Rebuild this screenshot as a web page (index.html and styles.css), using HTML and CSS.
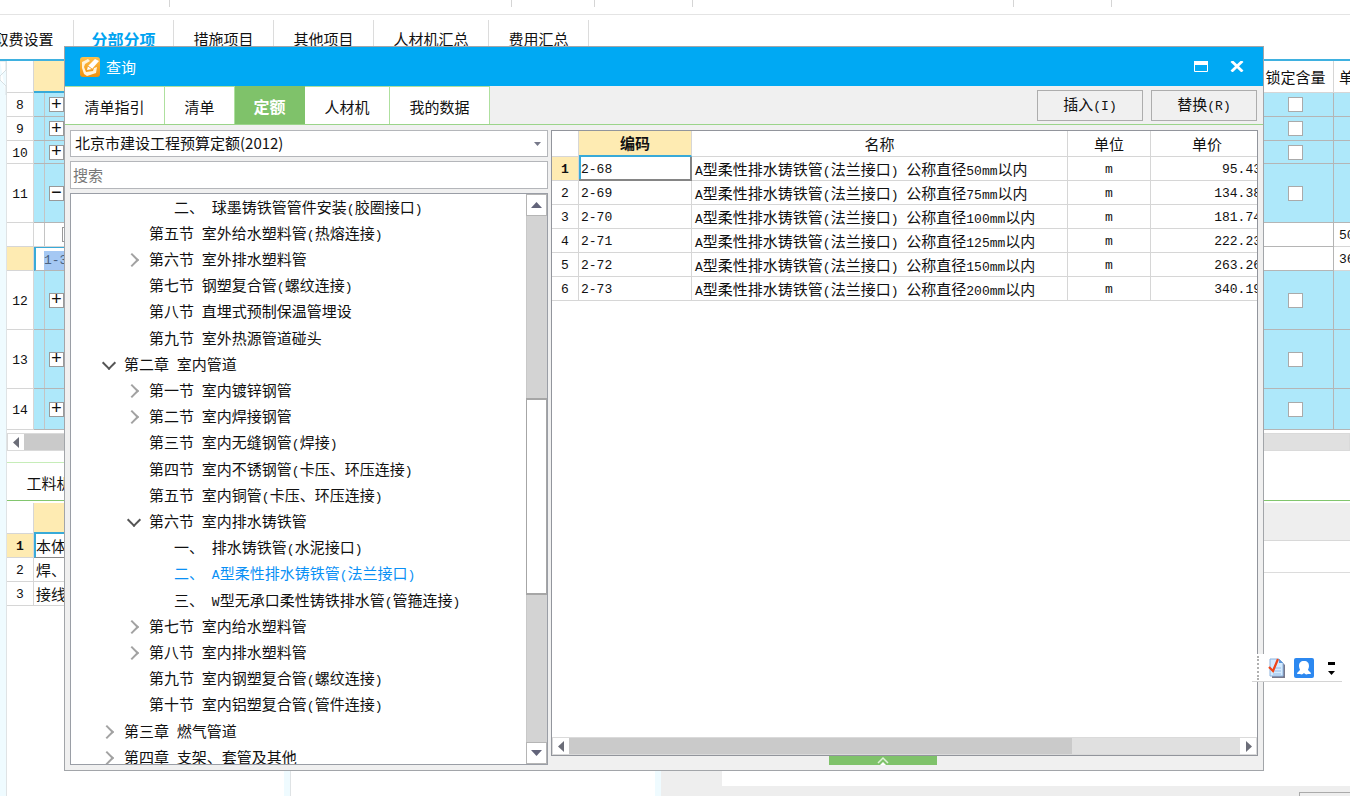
FILE: index.html
```html
<!DOCTYPE html>
<html lang="zh-CN">
<head>
<meta charset="utf-8">
<title>查询</title>
<link rel="stylesheet" href="styles.css">
</head>
<body>
<div class="app">
  <div class="ribbon"><i class="g1"></i><i class="g2"></i><i class="g3"></i><i class="g4"></i><i class="g5"></i><i class="g6"></i></div>
  <nav class="main-tabs">
    <button>取费设置</button><button class="on">分部分项</button><button>措施项目</button><button>其他项目</button><button class="wide">人材机汇总</button><button>费用汇总</button>
  </nav>
  <div class="workspace">
    <aside class="rail"><svg width="7" height="34" viewBox="0 0 7 34"><path d="M0 0H6V9L0 15V19L6 25V34" fill="#fff" stroke="#d6dfe2"/></svg></aside>
    <main class="content">
      <table class="bill">
        <colgroup><col class="c-num"><col><col class="c-lock"><col class="c-last"></colgroup>
        <thead><tr class="h32"><th></th><th class="hot"></th><th>锁定含量</th><th class="lead">单</th></tr></thead>
        <tbody>
          <tr class="blue h24"><td>8</td><td class="tree-cell"><button class="box" aria-label="展开">+</button></td><td><input type="checkbox" aria-label="锁定含量 8"></td><td></td></tr>
          <tr class="blue h24"><td>9</td><td class="tree-cell"><button class="box" aria-label="展开">+</button></td><td><input type="checkbox" aria-label="锁定含量 9"></td><td></td></tr>
          <tr class="blue h23"><td>10</td><td class="tree-cell"><button class="box" aria-label="展开">+</button></td><td><input type="checkbox" aria-label="锁定含量 10"></td><td></td></tr>
          <tr class="blue h59"><td>11</td><td class="tree-cell"><button class="box" aria-label="折叠">−</button></td><td><input type="checkbox" aria-label="锁定含量 11"></td><td></td></tr>
          <tr class="h24"><td></td><td class="tree-cell sub"><button class="box" aria-label="折叠"></button></td><td></td><td class="lead">50</td></tr>
          <tr class="h24 current"><td class="mark"></td><td class="cell-edit"><span>1-3</span></td><td></td><td class="lead">36</td></tr>
          <tr class="blue h59"><td>12</td><td class="tree-cell"><button class="box" aria-label="展开">+</button></td><td><input type="checkbox" aria-label="锁定含量 12"></td><td></td></tr>
          <tr class="blue h59"><td>13</td><td class="tree-cell"><button class="box" aria-label="展开">+</button></td><td><input type="checkbox" aria-label="锁定含量 13"></td><td></td></tr>
          <tr class="blue h41"><td>14</td><td class="tree-cell"><button class="box" aria-label="展开">+</button></td><td><input type="checkbox" aria-label="锁定含量 14"></td><td></td></tr>
        </tbody>
      </table>
      <div class="hbar back-bar"><button aria-label="向左滚动"><svg width="7" height="11" viewBox="0 0 7 11"><path d="M6 0V11L0 5.500Z" fill="#6b6d78"/></svg></button><span class="thumb"></span></div>
      <div class="sub-tabs"><button>工料机显示</button></div>
      <div class="lower">
        <section class="pane-a">
          <table class="detail">
            <colgroup><col class="c-num"><col></colgroup>
            <thead><tr class="h31"><th></th><th class="hot"></th></tr></thead>
            <tbody>
              <tr class="h24"><td class="mark">1</td><td class="sel">本体</td></tr>
              <tr class="h24"><td>2</td><td>焊、</td></tr>
              <tr class="h24"><td>3</td><td>接线</td></tr>
            </tbody>
          </table>
        </section>
        <section class="pane-b"></section>
        <section class="pane-c">
          <div class="c-head"></div><div class="c-line"></div>
          <div class="c-body"><div class="c-side"></div><div class="c-sheet"></div></div>
          <div class="c-foot"><button aria-label="操作"></button></div>
        </section>
      </div>
    </main>
  </div>
</div>

<div class="dialog" role="dialog" aria-label="查询">
  <header class="titlebar">
    <svg width="20" height="20" viewBox="0 0 20 20"><defs><linearGradient id="o" x2="0" y2="1"><stop stop-color="#ffc04a"/><stop offset="1" stop-color="#f0900c"/></linearGradient></defs><rect width="20" height="20" rx="3" fill="url(#o)"/><path d="M2 5L8 2L10 4L5 7L4 10L6 15L13 14L14 11L17 10L16 16L7 19L4 17L2 11Z" fill="#fff3da"/><path d="M7 13L8 9L15 2L19 4L12 12Z" fill="#fff"/><path d="M8 9L12 12" stroke="#f6a52d"/></svg>
    <h1>查询</h1>
    <button aria-label="最大化"><svg width="14" height="11" viewBox="0 0 14 11"><path d="M.5.5H13.500V10.500H.5Z" fill="none" stroke="#fff"/><path d="M0 0H14V4H0Z" fill="#fff"/></svg></button>
    <button aria-label="关闭"><svg width="14" height="11" viewBox="0 0 14 11"><path d="M1.500 0L12.500 10.500M12.500 0L1.500 10.500" stroke="#fff" stroke-width="2.800"/></svg></button>
  </header>
  <div class="tabstrip">
    <nav><button class="w100">清单指引</button><button class="w70">清单</button><button class="w70 on">定额</button><button class="w85">人材机</button><button class="w100">我的数据</button></nav>
    <div class="actions"><button>插入<span class="n">(I)</span></button><button>替换<span class="n">(R)</span></button></div>
  </div>
  <div class="panes">
    <section class="left">
      <div class="combo"><select aria-label="定额库"><option>北京市建设工程预算定额(2012)</option></select><svg width="7" height="4" viewBox="0 0 7 4"><path d="M0 0H7L3.500 4Z" fill="#77798a"/></svg></div>
      <input class="search" type="text" placeholder="搜索" aria-label="搜索">
      <div class="tree">
        <ul>
          <li class="l3">二、<span class="n"> </span>球墨铸铁管管件安装<span class="n">(</span>胶圈接口<span class="n">)</span></li>
          <li class="l2">第五节<span class="n"> </span>室外给水塑料管<span class="n">(</span>热熔连接<span class="n">)</span></li>
          <li class="l2 shut">第六节<span class="n"> </span>室外排水塑料管</li>
          <li class="l2">第七节<span class="n"> </span>钢塑复合管<span class="n">(</span>螺纹连接<span class="n">)</span></li>
          <li class="l2">第八节<span class="n"> </span>直埋式预制保温管埋设</li>
          <li class="l2">第九节<span class="n"> </span>室外热源管道碰头</li>
          <li class="l1 open">第二章<span class="n"> </span>室内管道</li>
          <li class="l2 shut">第一节<span class="n"> </span>室内镀锌钢管</li>
          <li class="l2 shut">第二节<span class="n"> </span>室内焊接钢管</li>
          <li class="l2">第三节<span class="n"> </span>室内无缝钢管<span class="n">(</span>焊接<span class="n">)</span></li>
          <li class="l2">第四节<span class="n"> </span>室内不锈钢管<span class="n">(</span>卡压、环压连接<span class="n">)</span></li>
          <li class="l2">第五节<span class="n"> </span>室内铜管<span class="n">(</span>卡压、环压连接<span class="n">)</span></li>
          <li class="l2 open">第六节<span class="n"> </span>室内排水铸铁管</li>
          <li class="l3">一、<span class="n"> </span>排水铸铁管<span class="n">(</span>水泥接口<span class="n">)</span></li>
          <li class="l3 picked">二、<span class="n"> A</span>型柔性排水铸铁管<span class="n">(</span>法兰接口<span class="n">)</span></li>
          <li class="l3">三、<span class="n"> W</span>型无承口柔性铸铁排水管<span class="n">(</span>管箍连接<span class="n">)</span></li>
          <li class="l2 shut">第七节<span class="n"> </span>室内给水塑料管</li>
          <li class="l2 shut">第八节<span class="n"> </span>室内排水塑料管</li>
          <li class="l2">第九节<span class="n"> </span>室内钢塑复合管<span class="n">(</span>螺纹连接<span class="n">)</span></li>
          <li class="l2">第十节<span class="n"> </span>室内铝塑复合管<span class="n">(</span>管件连接<span class="n">)</span></li>
          <li class="l1 shut">第三章<span class="n"> </span>燃气管道</li>
          <li class="l1 shut">第四章<span class="n"> </span>支架、套管及其他</li>
        </ul>
        <div class="vbar">
          <button aria-label="向上滚动"><svg width="11" height="6" viewBox="0 0 11 6"><path d="M0 6H11L5.500 0Z" fill="#62647a"/></svg></button>
          <div class="track"><span class="gap-a"></span><span class="thumb"></span><span class="gap-b"></span></div>
          <button aria-label="向下滚动"><svg width="11" height="6" viewBox="0 0 11 6"><path d="M0 0H11L5.500 6Z" fill="#62647a"/></svg></button>
        </div>
      </div>
    </section>
    <section class="right">
      <div class="grid">
        <div class="grid-view">
          <table class="items">
            <colgroup><col class="c-num"><col class="c-code"><col><col class="c-unit"><col class="c-price"></colgroup>
            <thead><tr><th></th><th class="hot">编码</th><th>名称</th><th>单位</th><th>单价</th></tr></thead>
            <tbody>
              <tr><td class="mark">1</td><td class="sel">2-68</td><td><span class="n">A</span>型柔性排水铸铁管<span class="n">(</span>法兰接口<span class="n">) </span>公称直径<span class="n">50mm</span>以内</td><td>m</td><td>95.43</td></tr>
              <tr><td>2</td><td>2-69</td><td><span class="n">A</span>型柔性排水铸铁管<span class="n">(</span>法兰接口<span class="n">) </span>公称直径<span class="n">75mm</span>以内</td><td>m</td><td>134.38</td></tr>
              <tr><td>3</td><td>2-70</td><td><span class="n">A</span>型柔性排水铸铁管<span class="n">(</span>法兰接口<span class="n">) </span>公称直径<span class="n">100mm</span>以内</td><td>m</td><td>181.74</td></tr>
              <tr><td>4</td><td>2-71</td><td><span class="n">A</span>型柔性排水铸铁管<span class="n">(</span>法兰接口<span class="n">) </span>公称直径<span class="n">125mm</span>以内</td><td>m</td><td>222.23</td></tr>
              <tr><td>5</td><td>2-72</td><td><span class="n">A</span>型柔性排水铸铁管<span class="n">(</span>法兰接口<span class="n">) </span>公称直径<span class="n">150mm</span>以内</td><td>m</td><td>263.26</td></tr>
              <tr><td>6</td><td>2-73</td><td><span class="n">A</span>型柔性排水铸铁管<span class="n">(</span>法兰接口<span class="n">) </span>公称直径<span class="n">200mm</span>以内</td><td>m</td><td>340.19</td></tr>
            </tbody>
          </table>
        </div>
        <div class="hbar"><button aria-label="向左滚动"><svg width="7" height="11" viewBox="0 0 7 11"><path d="M6 0V11L0 5.500Z" fill="#6b6d78"/></svg></button><div class="track"><span class="thumb"></span></div><button aria-label="向右滚动"><svg width="7" height="11" viewBox="0 0 7 11"><path d="M1 0V11L7 5.500Z" fill="#6b6d78"/></svg></button></div>
      </div>
      <button class="drawer" aria-label="展开"><svg width="12" height="9" viewBox="0 0 12 9"><path d="M1 7L6 2L11 7" fill="none" stroke="#dff3d8" stroke-width="1.500"/><path d="M3 9L6 6L9 9Z" fill="#fff"/></svg></button>
    </section>
  </div>
</div>

<div class="ime">
  <span class="grip"></span>
  <svg width="18" height="20" viewBox="0 0 18 20"><path d="M4 3H13L17 7V20H4Z" fill="#77798c"/><path d="M2 1H11L15 5V18H2Z" fill="#d4ebff" stroke="#8cb2df"/><path d="M11 1V5H15Z" fill="#5a94d8"/><path d="M5 10H13M5 13H13M5 16H13" stroke="#95bce8"/><path d="M1 9L5 13L10 1" fill="none" stroke="#f04518" stroke-width="2.200"/></svg>
  <svg width="20" height="20" viewBox="0 0 20 20"><rect width="20" height="20" rx="2" fill="#2c88f0"/><path d="M10 3C6.500 3 5 5 5 8C5 10 6 11 6 12L3 15C3 16.500 5 16 6 16C8 17 9 16 10 15C11 16 12 17 14 16C15 16 17 16.500 17 15L14 12C14 11 15 10 15 8C15 5 13.500 3 10 3Z" fill="#fff"/></svg>
  <svg width="7" height="14" viewBox="0 0 7 14"><path d="M0 1H7V4H0ZM0 10H7L3.500 14Z" fill="#000"/></svg>
</div>
</body>
</html>
```
FILE: styles.css
```css
* { box-sizing: border-box; }
html, body { height: 100%; }
body {
  margin: 0;
  position: relative;
  overflow: hidden;
  background: #fff;
  color: #111;
  font: 15px/20px "Noto Sans CJK SC", sans-serif;
}
button, input, select { font: inherit; color: inherit; margin: 0; padding: 0; border: 0; background: none; border-radius: 0; }
svg { display: block; flex: none; }
.n { font: 13px/20px "Liberation Mono", monospace; white-space: pre; }

/* main window */
.app { height: 100%; display: flex; flex-direction: column; }
.ribbon { flex: none; height: 15px; border-bottom: 1px solid #e4e4e4; display: flex; }
.ribbon i { height: 7px; border-right: 1px solid #d5d5d5; }
.g1 { width: 170px; } .g2 { width: 342px; } .g3 { width: 83px; }
.g4 { width: 98px; } .g5 { width: 321px; } .g6 { width: 98px; }
.main-tabs { flex: none; display: flex; height: 46px; padding-top: 5px; margin-left: -26px; border-bottom: 2px solid #3fb1e0; }
.main-tabs button { width: 100px; flex: none; border-right: 1px solid #dcdcdc; padding-bottom: 2px; }
.main-tabs .wide { width: 115px; }
.main-tabs .on { color: #00a3f0; font-size: 16px; font-weight: bold; }
.workspace { flex: 1; min-height: 0; display: flex; }
.rail { flex: none; width: 7px; background: #effbff; border-right: 1px solid #dfe3e5; }
.content { flex: 1; min-width: 0; display: flex; flex-direction: column; }

table { border-collapse: separate; border-spacing: 0; table-layout: fixed; width: 100%; }
th, td { padding: 0; font-weight: normal; border-right: 1px solid #d6d6d6; border-bottom: 1px solid #d6d6d6; white-space: nowrap; overflow: hidden; text-align: center; }
.c-num { width: 27px; }
.c-lock { width: 76px; }
.c-last { width: 16px; }
.bill tr > :last-child { border-right: 0; }
.hot { background: #feebb2; font-weight: bold; border-bottom: 2px solid #38aad8; }
.mark { background: #feebb2; font-weight: bold; }
.h31 { height: 31px; } .h32 { height: 32px; } .h24 { height: 24px; } .h23 { height: 23px; } .h59 { height: 59px; } .h41 { height: 41px; }
.bill td { font: 13px/16px "Liberation Mono", monospace; }
.bill td:first-child, .bill td.lead { padding-top: 3px; }
.blue td:not(:first-child) { background: #aee8fa; border-color: #b5b5b5; }
.bill td:nth-child(3) { border-color: #b5b5b5; }
.bill .lead { text-align: left; padding-left: 5px; }
.bill .tree-cell { text-align: left; padding-left: 10px; line-height: 0; }
.tree-cell::before { content: ""; display: inline-block; width: 1px; height: 60px; margin: -20px 0; background: #c4c4c4; vertical-align: middle; }
.box { width: 15px; height: 15px; margin-left: 4px; border: 1px solid #999; background: #fff; font: 18px/12px "Liberation Mono", monospace; vertical-align: middle; }
.sub .box { margin-left: 17px; }
input[type=checkbox] { appearance: none; width: 15px; height: 15px; border: 1px solid #aaa; background: #fff; display: block; margin: 0 auto; }
.bill .cell-edit { text-align: left; padding: 2px 0 0 8px; border: 1px solid #38aad8; border-left-width: 2px; border-bottom-color: #b5b5b5; }
.cell-edit span { background: #a5c8f3; color: #4a617e; display: inline-block; line-height: 19px; }

.hbar { flex: none; display: flex; height: 18px; background: #e0e0e0; border: 1px solid #dadada; }
.hbar button { width: 16px; background: #fff; display: flex; align-items: center; justify-content: center; }
.hbar .track { flex: 1; }
.hbar .thumb { display: block; height: 100%; width: 75%; background: #cacaca; }
.back-bar { margin-top: 3px; }
.sub-tabs { flex: none; margin-top: 11px; height: 39px; border-bottom: 1px solid #82c66e; }
.sub-tabs button { width: 114px; height: 38px; border-top: 1px solid #c6edb8; padding-top: 3px; }
.lower { flex: 1; min-height: 0; display: flex; padding-top: 2px; }
.pane-a { width: 277px; flex: none; }
.pane-b { width: 377px; flex: none; border-left: 6px solid #effbff; border-right: 6px solid #effbff; box-shadow: inset 1px 0 #dfe3e5; }
.pane-c { flex: 1; min-width: 0; display: flex; flex-direction: column; }
.detail td:first-child { font: 13px/20px "Liberation Mono", monospace; padding-top: 2px; }
.detail td:nth-child(2) { text-align: left; padding-left: 2px; }
.detail td.mark, .items td.mark { font-weight: bold; }
.detail td.sel { border-left: 2px solid #38aad8; border-bottom-color: #888; padding-left: 0; }
.c-head { height: 38px; background: #eee; border-bottom: 1px solid #d8d8d8; }
.c-line { height: 32px; border-bottom: 1px solid #dcdcdc; }
.c-body { flex: 1; display: flex; }
.c-side { width: 61px; background: #eee; }
.c-foot { height: 10px; background: #eee; display: flex; justify-content: flex-end; align-items: flex-end; }
.c-foot button { width: 51px; height: 4px; border: 1px solid #aaa; border-width: 1px 0 0 1px; }

/* query window */
.dialog { position: absolute; left: 64px; right: 86px; top: 46px; bottom: 25px; border: 1px solid #a2a5a9; background: #f0f0f0; display: flex; flex-direction: column; }
.titlebar { flex: none; height: 39px; background: #00a9f3; display: flex; align-items: center; padding: 0 8px 0 15px; }
.titlebar h1 { flex: 1; margin: 0 0 0 6px; font-size: 15px; font-weight: normal; color: #fff; }
.titlebar button { width: 36px; height: 38px; display: flex; align-items: center; justify-content: center; }
.tabstrip { flex: none; height: 39px; border-bottom: 1px solid #9bd48a; display: flex; justify-content: space-between; }
.tabstrip nav { display: flex; }
.tabstrip nav button { background: #fff; border-top: 1px solid #aee09e; border-right: 1px solid #aee09e; padding-top: 2px; }
.tabstrip nav .on { background: #7fc26a; border-color: #7fc26a; color: #fff; font-weight: bold; font-size: 16px; padding-top: 0; }
.w100 { width: 100px; } .w70 { width: 70px; } .w85 { width: 85px; }
.actions { display: flex; gap: 8px; padding: 4px 6px 3px 0; }
.actions button { width: 106px; height: 31px; border: 1px solid #adadad; }
.panes { flex: 1; min-height: 0; display: flex; gap: 3px; padding: 5px; }
.left { flex: none; width: 478px; display: flex; flex-direction: column; gap: 4px; }
.combo { position: relative; height: 27px; }
.combo select { appearance: none; width: 100%; height: 27px; padding: 0 0 2px 4px; border: 1px solid #b4b6ba; background: #fff; }
.combo svg { position: absolute; right: 7px; top: 12px; pointer-events: none; }
.search { height: 28px; width: 100%; padding: 0 0 2px 2px; border: 1px solid #b4b6ba; background: #fff; }
.search::placeholder { color: #777; opacity: 1; }
.tree { flex: 1; min-height: 0; display: flex; border: 1px solid #9a9ea6; background: #fff; overflow: hidden; }
.tree ul { flex: 1; min-height: 0; list-style: none; margin: 0; padding: 0; }
.tree li { position: relative; height: 26px; line-height: 26px; white-space: nowrap; }
.tree li:nth-child(5n) { height: 27px; }
.l1 { padding-left: 53px; } .l2 { padding-left: 78px; } .l3 { padding-left: 103px; }
.picked { color: #0a90f5; }
.shut::before, .open::before { content: ""; position: absolute; width: 8px; height: 8px; margin-left: -22px; top: 9px; border: solid #a2a2a2; border-width: 2px 2px 0 0; transform: rotate(45deg); }
.open::before { border-color: #555; transform: rotate(135deg); top: 7px; margin-left: -20px; }
.vbar { flex: none; width: 21px; display: flex; flex-direction: column; }
.vbar button { flex: none; height: 22px; border: 1px solid #b5b5b5; background: #fff; display: flex; align-items: center; justify-content: center; }
.vbar .track { flex: 1; display: flex; flex-direction: column; }
.vbar .track span { background: #d3d3d3; border-left: 1px solid #c8c8c8; }
.vbar .gap-a { flex: 184; } .vbar .gap-b { flex: 148; }
.vbar .track .thumb { flex: 195; background: #fff; border: 1px solid #a6a6a6; border-top-width: 2px; border-bottom-width: 2px; }
.right { flex: 1; min-width: 0; display: flex; flex-direction: column; align-items: center; }
.grid { width: 100%; flex: 1; min-height: 0; display: flex; flex-direction: column; border: 1px solid #92959c; background: #fff; }
.grid-view { flex: 1; min-height: 0; overflow: hidden; }
.grid-view table { width: calc(100% + 7px); }
.c-code { width: 113px; } .c-unit { width: 83px; } .c-price { width: 113px; }
.items th { height: 26px; }
.items td { height: 24px; padding-top: 3px; font: 13px/16px "Liberation Mono", monospace; }
.items td:nth-child(2) { text-align: left; padding-left: 2px; }
.items td:nth-child(3) { text-align: left; padding-left: 3px; font: 15px/16px "Noto Sans CJK SC", sans-serif; }
.items .n { line-height: 16px; }
.items td:nth-child(5) { text-align: right; padding-right: 2px; }
.items .sel { border: 2px solid #858585; border-width: 0 2px 2px 0; box-shadow: inset 2px 0 #38aad8; }
.drawer { flex: none; width: 108px; height: 9px; background: #7fc26a; display: flex; justify-content: center; margin-right: 44px; }

/* floating input bar */
.ime { position: absolute; right: 8px; top: 654px; width: 90px; height: 28px; background: #fff; border-bottom: 1px solid #d4d4d4; display: flex; align-items: center; gap: 8px; padding: 0 7px 0 5px; }
.ime svg:last-child { margin-left: 6px; }
.grip { height: 24px; width: 3px; border-left: 2px dotted #b0b0b0; }
```
